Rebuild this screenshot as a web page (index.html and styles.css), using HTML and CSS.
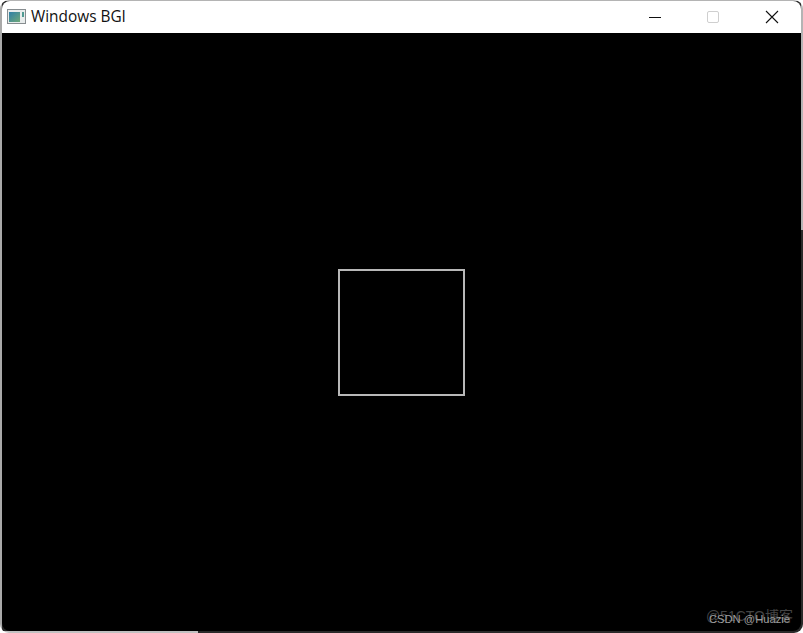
FILE: index.html
```html
<!DOCTYPE html>
<html lang="en">
<head>
    <meta charset="UTF-8">
    <title>Windows BGI</title>
    <link rel="stylesheet" href="styles.css">
</head>
<body>
    <div class="window">
        <div class="titlebar">
            <svg class="app-icon" width="19" height="15" viewBox="0 0 19 15">
                <defs>
                    <linearGradient id="iconFill" x1="0" y1="0" x2="1" y2="1">
                        <stop offset="0" stop-color="#2f7fa8"/>
                        <stop offset="1" stop-color="#6fa878"/>
                    </linearGradient>
                </defs>
                <rect x="0.5" y="0.5" width="18" height="14" fill="#e8ecec" stroke="#878d90"/>
                <rect x="2" y="3" width="11" height="10" fill="url(#iconFill)"/>
                <rect x="15" y="3" width="2" height="5" fill="#4f9a92"/>
            </svg>
            <span class="title">Windows BGI</span>
            <div class="controls">
                <button class="ctl">
                    <svg width="14" height="14" viewBox="0 0 14 14"><path d="M1 7.5H13" stroke="#111" stroke-width="1"/></svg>
                </button>
                <button class="ctl">
                    <svg width="14" height="14" viewBox="0 0 14 14"><rect x="1.5" y="1.5" width="11" height="11" rx="1.5" fill="none" stroke="#cfcfcf"/></svg>
                </button>
                <button class="ctl">
                    <svg width="14" height="14" viewBox="0 0 14 14"><path d="M1 1L13 13M13 1L1 13" stroke="#111" stroke-width="1.1"/></svg>
                </button>
            </div>
        </div>
        <div class="canvas">
            <div class="square"></div>
            <span class="mark mark-back">@51CTO博客</span>
            <span class="mark mark-front">CSDN @Huazie</span>
        </div>
    </div>
</body>
</html>
```

FILE: styles.css
```css
html, body {
    margin: 0;
    height: 100%;
}
body {
    background: #fff;
    font-family: "Open Sans", "Liberation Sans", "Noto Sans CJK SC", sans-serif;
    overflow: hidden;
}
/* frame is lighter on the left, top right and bottom left, dark elsewhere */
.window {
    height: 633px;
    box-sizing: border-box;
    display: flex;
    flex-direction: column;
    padding: 1px 2px 2px;
    border-radius: 9px;
    overflow: hidden;
    background:
        linear-gradient(#a9a9a9, #a9a9a9) left top / 2px 100% no-repeat,
        linear-gradient(#b4b4b4, #b4b4b4) right top / 2px 230px no-repeat,
        linear-gradient(#c0c0c0, #c0c0c0) left bottom / 198px 2px no-repeat,
        linear-gradient(#b4b4b4, #b4b4b4) left top / 100% 1px no-repeat,
        #2a2a2a;
}
.titlebar {
    height: 32px;
    background: #fff;
    border-radius: 8px 8px 0 0;
    display: flex;
    align-items: center;
    padding-left: 5px;
}
.app-icon {
    margin-right: 5px;
    margin-top: -2px;
}
.title {
    font-size: 15.4px;
    color: #111;
    margin-top: -2px;
}
.controls {
    margin-left: auto;
    display: flex;
    margin-top: -1px;
}
.ctl {
    width: 58px;
    height: 32px;
    padding: 0;
    border: none;
    background: none;
    display: flex;
    align-items: center;
    justify-content: center;
}
.ctl:nth-child(1), .ctl:nth-child(2) {
    position: relative;
    left: -1px;
}
.canvas {
    flex: 1;
    position: relative;
    display: flex;
    align-items: center;
    justify-content: center;
    background: #000;
    border-radius: 0 0 8px 8px;
}
.square {
    width: 123px;
    height: 123px;
    border: 2px solid #b8b8b8;
}
.mark {
    position: absolute;
    white-space: nowrap;
    font-family: "Liberation Sans", "Noto Sans CJK SC", sans-serif;
}
.mark-back {
    right: 8px;
    bottom: 6px;
    font-size: 14px;
    color: #444;
}
.mark-front {
    right: 11px;
    bottom: 6px;
    font-size: 11.2px;
    color: #9c9c9c;
}
```
